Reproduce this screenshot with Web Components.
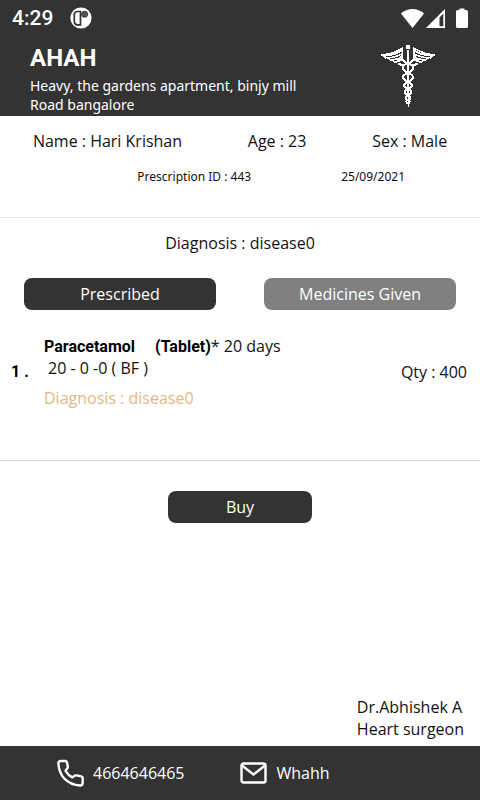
<!DOCTYPE html>
<html lang="en">
<head>
<meta charset="utf-8">
<meta name="viewport" content="width=device-width, initial-scale=1">
<title>Prescription</title>
<style>
body { margin: 0; background: #fff; color: #111; font: 16px/22px "Open Sans", sans-serif; --dark: #333; --light: #fff; --small-font: "Noto Sans", sans-serif; }
</style>
</head>
<body>
<rx-page>
  <status-bar slot="top">4:29</status-bar>
  <clinic-header slot="top">AHAH<span slot="address">Heavy, the gardens apartment, binjy mill Road bangalore</span></clinic-header>
  <patient-info>
    <span slot="person">Name : Hari Krishan</span>
    <span slot="person">Age : 23</span>
    <span slot="person">Sex : Male</span>
    <span slot="record">Prescription ID : 443</span>
    <span slot="record">25/09/2021</span>
  </patient-info>
  <diagnosis-tabs>Diagnosis : disease0</diagnosis-tabs>
  <medicine-item>
    <span slot="index">1 .</span>
    <span slot="name">Paracetamol</span>
    <span slot="form">(Tablet)</span>
    <span slot="days">* 20 days</span>
    <span slot="dose">20 - 0 -0 ( BF )</span>
    <span slot="diagnosis">Diagnosis : disease0</span>
    <span slot="quantity">Qty : 400</span>
  </medicine-item>
  <buy-action>Buy</buy-action>
  <doctor-sign slot="bottom">Dr.Abhishek A<span slot="role">Heart surgeon</span></doctor-sign>
  <contact-bar slot="bottom"><span slot="phone">4664646465</span><span slot="mail">Whahh</span></contact-bar>
</rx-page>
<script>
function define(name, html) {
  const template = document.createElement('template');
  template.innerHTML = html;
  customElements.define(name, class extends HTMLElement {
    constructor() {
      super();
      this.attachShadow({ mode: 'open' }).append(template.content.cloneNode(true));
    }
  });
}

define('rx-page', `
<style>
:host { display: flex; flex-direction: column; min-height: 100vh; }
main { flex: 1; }
</style>
<slot name="top"></slot><main><slot></slot></main><slot name="bottom"></slot>`);

define('status-bar', `
<style>
:host { display: flex; align-items: center; gap: 16px; height: 36px; padding: 0 12px; background: var(--dark); color: var(--light); font: 500 21px/36px Roboto, sans-serif; }
svg { display: block; }
.end { margin-left: auto; }
</style>
<slot></slot>
<svg width="24" height="22" viewBox="-1 0 24 22" aria-hidden="true">
  <circle cx="11" cy="11" r="10.6" fill="#fff"/>
  <path d="M10.500 4.500H7.500Q4.300 4.500 4.300 7.800V14.600Q4.300 17.900 7.500 17.900H10.500Z" fill="#fff" stroke="#333" stroke-width="1.700"/>
  <circle cx="14.600" cy="7.300" r="3" fill="#555" stroke="#333" stroke-width="1"/>
</svg>
<svg class="end" width="68" height="22" viewBox="400 6 68 22" fill="#fff" aria-hidden="true">
  <path d="M401 12.5Q406 8 412.5 8T424 12.5L412.5 27Z"/>
  <path fill-rule="evenodd" d="M445 8V27H426ZM439.5 16.5V25.3H443.3V12.6Z"/>
  <path d="M459.5 7.5h5V9h2q1.500 0 1.500 1.500V25.500q0 1.500-1.500 1.500h-9q-1.500 0-1.500-1.500V10.500q0-1.500 1.500-1.500h2Z"/>
</svg>`);

define('clinic-header', `
<style>
:host { display: flex; justify-content: space-between; align-items: flex-start; padding: 8px 44px 2px 30px; background: var(--dark); color: var(--light); }
h1 { margin: 0 0 4px; font: bold 24px/28px Roboto, sans-serif; }
p { margin: 0; max-width: 280px; font: 14px/19px var(--small-font); }
</style>
<div><h1><slot></slot></h1><p><slot name="address"></slot></p></div>
<svg width="56" height="64" viewBox="15 18 168 192" fill="none" stroke="#fff" stroke-width="6" shape-rendering="crispEdges" aria-hidden="true">
  <path fill="#fff" stroke="none" d="M93 21h12v12H93ZM96 36h6L101 207H98Z"/>
  <path stroke-width="5" d="M84 29Q73 36 61 42L42 48L17 51M83 37Q64 49 43 52L25 54L33 60M84 46Q65 57 38 60L48 66M84 55Q71 64 50 66L60 72M83 62Q75 70 61 72M82 29V48L76 60"/>
  <path d="M63 73Q72 63 83 66L99 78M69 76Q77 82 91 81"/>
  <path stroke-width="5" d="M180 51L156 48Q136 42 114 29M115 37Q134 49 155 52L173 54L165 60M114 46Q133 57 160 60L150 66M114 55Q127 64 148 66L138 72M115 62Q123 70 137 72M116 29V48L122 60"/>
  <path d="M135 73Q126 63 115 66L99 78M129 76Q121 82 107 81"/>
  <path d="M99 76C78 82 80 97 99 105C119 112 119 123 99 131C83 137 84 147 99 153C114 158 112 167 99 172C89 176 90 183 99 186C107 189 105 194 99 196"/>
  <path d="M99 76C120 82 118 97 99 105C79 112 79 123 99 131C115 137 114 147 99 153C84 158 86 167 99 172C109 176 108 183 99 186C91 189 93 194 99 196"/>
</svg>`);

define('patient-info', `
<style>
:host { display: block; padding: 14px 0 29px; border-bottom: 1px solid #ebebeb; }
.person { display: flex; justify-content: space-around; }
.record { display: flex; justify-content: flex-end; gap: 90px; padding: 14px 75px 0 0; font-family: var(--small-font); font-size: 12px; }
</style>
<div class="person"><slot name="person"></slot></div>
<div class="record"><slot name="record"></slot></div>`);

define('diagnosis-tabs', `
<style>
:host { display: block; padding-top: 14px; text-align: center; }
p { margin: 0 0 24px; }
div { display: flex; justify-content: space-around; }
button { width: 40%; height: 32px; border: 0; border-radius: 8px; background: var(--dark); color: var(--light); font: inherit; }
.off { background: #808080; }
</style>
<p><slot></slot></p>
<div><button type="button">Prescribed</button><button type="button" class="off">Medicines Given</button></div>`);

define('medicine-item', `
<style>
:host { display: flex; align-items: center; margin-top: 25px; padding: 0 13px 51px 11px; border-bottom: 1px solid #d0cfe0; }
b { width: 33px; }
b, strong { font-family: Roboto, sans-serif; font-weight: bold; line-height: 1; color: #000; }
.body { flex: 1; }
.form { margin-left: 20px; }
.dose { padding-left: 4px; }
.diagnosis { margin-top: 8px; color: #deb887; }
</style>
<b><slot name="index"></slot></b>
<div class="body">
  <div><strong><slot name="name"></slot></strong><strong class="form"><slot name="form"></slot></strong><slot name="days"></slot></div>
  <div class="dose"><slot name="dose"></slot></div>
  <div class="diagnosis"><slot name="diagnosis"></slot></div>
</div>
<slot name="quantity"></slot>`);

define('buy-action', `
<style>
:host { display: flex; justify-content: center; padding: 30px 0; }
button { width: 30%; height: 32px; border: 0; border-radius: 8px; background: var(--dark); color: var(--light); font: inherit; }
</style>
<button type="button"><slot></slot></button>`);

define('doctor-sign', `
<style>
:host { display: flex; justify-content: flex-end; padding: 0 16px 6px; }
</style>
<div><div><slot></slot></div><div><slot name="role"></slot></div></div>`);

define('contact-bar', `
<style>
:host { display: flex; align-items: center; gap: 55px; height: 54px; padding: 0 56px; background: var(--dark); color: var(--light); }
a { display: flex; align-items: center; gap: 8px; color: inherit; text-decoration: none; }
svg { display: block; fill: none; stroke: #fff; stroke-width: 2.4; stroke-linejoin: round; stroke-linecap: round; }
</style>
<a href="tel:4664646465">
  <svg width="29" height="30" viewBox="0 0 29 30" aria-hidden="true"><path d="M4.800 3H9.300Q10.500 3 10.900 4.200L11.800 8.500Q12 9.700 11.200 10.500L9.500 12.700Q12 17.300 16.400 19.400L18.600 17.800Q19.500 17.200 20.600 17.400L25.200 18.400Q26.700 18.800 26.700 20V24.500Q26.700 27.500 24 27.500Q14.500 27 8.300 20.500Q2.800 14.500 2.400 5.200Q2.400 3 4.800 3Z"/></svg>
  <slot name="phone"></slot>
</a>
<a href="mailto:Whahh">
  <svg width="29" height="24" viewBox="0 0 29 24" aria-hidden="true"><rect x="2.500" y="2.500" width="24" height="19" rx="2"/><path d="M3 4.500L14.500 13.500L26 4.500"/></svg>
  <slot name="mail"></slot>
</a>`);
</script>
</body>
</html>
